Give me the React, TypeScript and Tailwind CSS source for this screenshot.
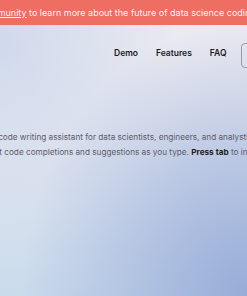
export default function App() {
  return (
    <div
      className="relative w-[247px] h-[296px] overflow-hidden bg-[radial-gradient(ellipse_at_100%_100%,#98acd8_0%,rgba(152,172,216,0)_65%),radial-gradient(ellipse_at_0%_15%,rgba(205,216,236,0.9)_0%,rgba(205,216,236,0)_50%),linear-gradient(180deg,#ecebf0_0%,#e4e6f0_40%,#cadbec_100%)]"
      style={{ fontFamily: "Inter, 'Open Sans', sans-serif" }}
    >
      <div className="h-[25px] bg-[#ee6e63] flex items-center overflow-hidden">
        <div className="whitespace-nowrap text-[9px] text-white/95 ml-[-58px]">
          Join our <span className="underline">community</span> to learn more about the future of data science coding
        </div>
      </div>
      <nav className="flex items-center h-[56px] pl-[114px] gap-[18px] whitespace-nowrap text-[8.5px] font-semibold text-[#1b1b22]">
        <span>Demo</span>
        <span>Features</span>
        <span>FAQ</span>
        <span className="ml-[-3px] mt-[5px] h-[25px] w-[60px] rounded-[4px] border border-[#9a9aa4] shrink-0" />
      </nav>
      <div className="mt-[49px] text-[8.2px] leading-[15px] text-[#5c5c68] whitespace-nowrap">
        <div className="ml-[-12px]">AI code writing assistant for data scientists, engineers, and analysts.</div>
        <div className="ml-[-20px]">
          smart code completions and suggestions as you type. <b className="text-[#222]">Press tab</b> to insert
        </div>
      </div>
    </div>
  );
}
